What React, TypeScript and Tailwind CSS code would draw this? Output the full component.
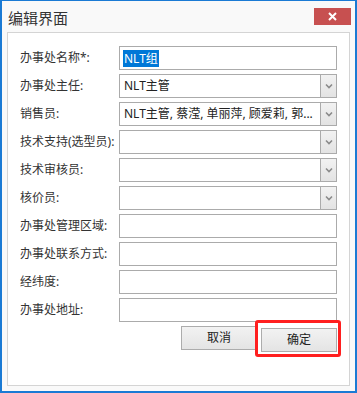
import React from 'react';

const FONT = { fontFamily: '"Noto Sans", "Noto Sans CJK SC", sans-serif' };

interface Field {
  label: string;
  value?: string;
  dropdown?: boolean;
  selected?: boolean;
}

const fields: Field[] = [
  { label: '办事处名称*:', value: 'NLT组', selected: true },
  { label: '办事处主任:', value: 'NLT主管', dropdown: true },
  { label: '销售员:', value: 'NLT主管, 蔡滢, 单丽萍, 顾爱莉, 郭...', dropdown: true },
  { label: '技术支持(选型员):', dropdown: true },
  { label: '技术审核员:', dropdown: true },
  { label: '核价员:', dropdown: true },
  { label: '办事处管理区域:' },
  { label: '办事处联系方式:' },
  { label: '经纬度:' },
  { label: '办事处地址:' },
];

function Chevron() {
  return (
    <svg width="8" height="6" viewBox="0 0 8 6">
      <polyline points="1,1.5 4,4.5 7,1.5" fill="none" stroke="#8a8a8a" strokeWidth="1.6" />
    </svg>
  );
}

function FieldRow({ field }: { field: Field }) {
  return (
    <div className="flex items-center h-[24px]">
      <div className="w-[99px] text-[12px] leading-[16px] text-[#333] whitespace-nowrap">{field.label}</div>
      <div className="flex w-[218px] h-[24px] border border-[#ababab] bg-white">
        <div className="flex-1 flex items-center pl-[3px] overflow-hidden whitespace-nowrap text-[12px] leading-[16px] text-[#222]">
          {field.value &&
            (field.selected ? (
              <span className="bg-[#0078d7] text-white px-[1px] leading-[17px]">{field.value}</span>
            ) : (
              <span className="pl-[1px]">{field.value}</span>
            ))}
        </div>
        {field.dropdown && (
          <div className="w-[16px] flex items-center justify-center border-l border-[#ababab] bg-gradient-to-b from-[#f2f2f2] to-[#e3e3e3]">
            <Chevron />
          </div>
        )}
      </div>
    </div>
  );
}

export default function App() {
  return (
    <div
      style={FONT}
      className="w-[357px] h-[393px] flex flex-col bg-[#f9f9f9] border-t border-l-2 border-r-2 border-b-2 border-[#1a7ad4]"
    >
      {/* Title bar */}
      <div className="h-[31px] flex items-start justify-between pl-[6px] pr-[4px]">
        <div className="mt-[7px] text-[15px] leading-[20px] text-[#333]">编辑界面</div>
        <button className="mt-[7px] w-[37px] h-[17px] flex items-center justify-center bg-[#c75050]">
          <svg width="9" height="9" viewBox="0 0 9 9">
            <path d="M1 1 L8 8 M8 1 L1 8" stroke="white" strokeWidth="2" />
          </svg>
        </button>
      </div>

      {/* Panel */}
      <div className="mx-[5px] h-[354px] border border-[#d4d4d4] bg-white pt-[13px] pl-[12px]">
        <div className="flex flex-col gap-[4px]">
          {fields.map((f, i) => (
            <FieldRow key={i} field={f} />
          ))}
        </div>

        <div className="flex justify-end gap-[4px] mt-[4px] w-[317px]">
          <button className="w-[76px] h-[24px] border border-[#acacac] bg-gradient-to-b from-[#f2f2f2] to-[#e4e4e4] text-[12px] text-[#222]">
            取消
          </button>
          <div className="relative">
            <button className="w-[76px] h-[24px] border border-[#acacac] bg-gradient-to-b from-[#f2f2f2] to-[#e4e4e4] text-[12px] text-[#222]">
              确定
            </button>
            <div className="absolute -left-[6px] -top-[6px] -right-[4px] -bottom-[5px] border-[3px] border-[#ff1f1f] rounded-[3px] pointer-events-none" />
          </div>
        </div>
      </div>
    </div>
  );
}
